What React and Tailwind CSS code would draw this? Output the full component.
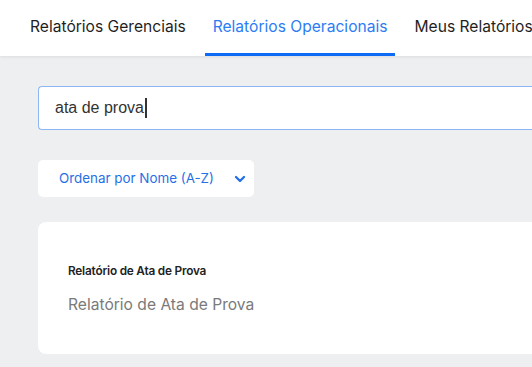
export default function App() {
  const tabs = ["Relatórios Gerenciais", "Relatórios Operacionais", "Meus Relatórios"];
  const active = 1;

  return (
    <div className="w-[532px] h-[367px] overflow-hidden bg-[#eeeff1] font-['Inter',sans-serif]">
      <div className="h-[56px] bg-white flex items-end pl-[22px] gap-[11px] whitespace-nowrap relative z-10 shadow-[0_1px_3px_rgba(0,0,0,0.08)]">
        {tabs.map((t, i) => (
          <div
            key={t}
            className={`px-2 h-full flex items-center text-[15.6px] border-b-[3px] ${
              i === active
                ? "text-[#2b7cf5] border-[#0d6af5]"
                : "text-[#1f1f1f] border-transparent"
            }`}
          >
            {t}
          </div>
        ))}
      </div>

      <div className="pl-[38px] pt-[30px]">
        <div className="h-[44px] bg-white border border-[#8db6f5] rounded-l-[4px] border-r-0 flex items-center pl-[16px] font-['Liberation_Sans',sans-serif] text-[16px] text-[#333]">
          ata de prova
          <span className="w-[2px] h-[20px] bg-[#333] ml-[1px]"></span>
        </div>

        <button className="mt-[30px] w-[216px] h-[37px] bg-white rounded-[5px] flex items-center justify-between pl-[21px] pr-[6px] text-[13.4px] text-[#2670e6]">
          <span>Ordenar por Nome (A-Z)</span>
          <svg width="16" height="16" viewBox="0 0 24 24" fill="none" stroke="#2670e6" strokeWidth="3.5" strokeLinecap="round" strokeLinejoin="round">
            <path d="M6 9l6 6 6-6" />
          </svg>
        </button>

        <div className="mt-[25px] h-[132px] bg-white rounded-l-[8px] pl-[30px] pt-[41px]">
          <div className="text-[11.8px] font-semibold text-[#222] tracking-[-0.2px]">
            Relatório de Ata de Prova
          </div>
          <div className="mt-[12px] text-[15.6px] text-[#7a7a7a]">
            Relatório de Ata de Prova
          </div>
        </div>
      </div>
    </div>
  );
}
